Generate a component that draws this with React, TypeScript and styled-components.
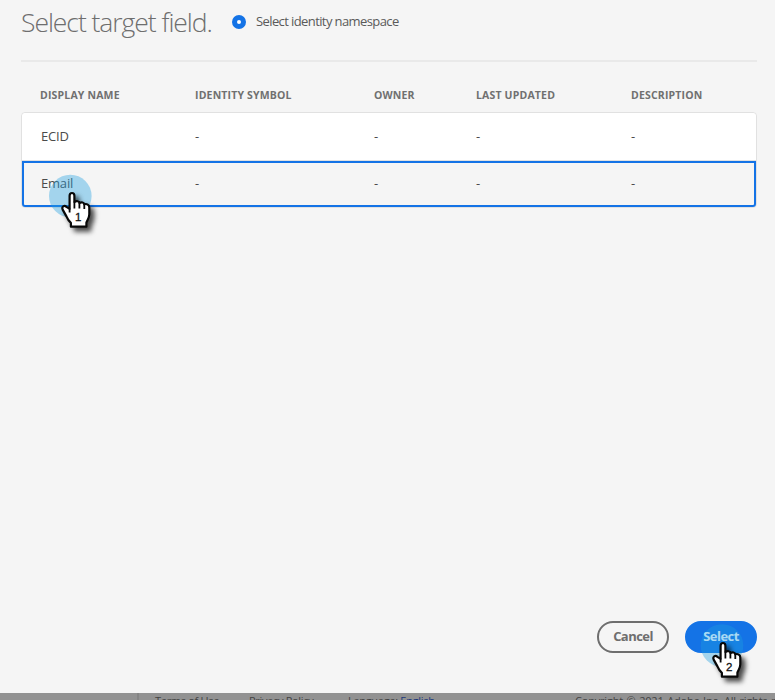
import React from 'react';
import styled, { createGlobalStyle } from 'styled-components';

const GlobalStyle = createGlobalStyle`
  * { box-sizing: border-box; }
  html, body { margin: 0; overflow: hidden; }
  body { background: #f5f5f5; font-family: 'Open Sans', 'Noto Sans', sans-serif; }
`;

const Page = styled.main`
  position: relative;
  display: flex;
  flex-direction: column;
  width: 775px;
  height: 700px;
  overflow: hidden;
  background: #f5f5f5;
`;

const Header = styled.header`
  display: flex;
  align-items: flex-start;
  height: 62px;
  margin: 0 18px 0 21px;
  border-bottom: 2px solid #e9e9e9;
`;

const Title = styled.h1`
  width: 211px;
  margin: 0;
  padding-top: 3px;
  font-size: 26.5px;
  font-weight: 300;
  line-height: 38px;
  letter-spacing: -1.05px;
  white-space: nowrap;
  color: #6e6e6e;
`;

const RadioLabel = styled.label`
  display: flex;
  align-items: center;
  gap: 10px;
  height: 20px;
  margin-top: 12px;
  font-size: 13px;
  letter-spacing: -0.6px;
  white-space: nowrap;
  color: #5a5a5a;
`;

const RadioText = styled.span`
  padding-bottom: 2px;
`;

const Radio = styled.span`
  width: 14px;
  height: 14px;
  border: 5px solid #1473e6;
  border-radius: 50%;
  background: #fff;
`;

const TableHead = styled.div`
  display: grid;
  grid-template-columns: 155px 179px 102px 155px 1fr;
  height: 50px;
  margin: 0 18px 0 21px;
  padding: 24px 0 0 19px;
  font-size: 10.5px;
  font-weight: 700;
  line-height: 18px;
  letter-spacing: 0.17px;
  white-space: nowrap;
  color: #707070;
`;

const TableBody = styled.div`
  height: 96px;
  margin: 0 18px 0 21px;
  border: 1px solid #e1e1e1;
  border-radius: 4px;
  background: #fff;
`;

const Row = styled.div<{ $selected?: boolean }>`
  display: grid;
  grid-template-columns: 154px 179px 102px 155px 1fr;
  align-items: center;
  height: ${p => (p.$selected ? 46 : 48)}px;
  padding: ${p => (p.$selected ? '0 0 2px 17px' : '0 0 1px 19px')};
  border: ${p => (p.$selected ? '2px solid #1473e6' : '0 solid #e1e1e1')};
  border-bottom-width: ${p => (p.$selected ? 2 : 1)}px;
  border-radius: ${p => (p.$selected ? '0 0 3px 3px' : '4px 4px 0 0')};
  background: ${p => (p.$selected ? '#f5f5f5' : '#fff')};
  font-size: 13px;
  letter-spacing: -0.2px;
  color: #4b4b4b;
`;

const Actions = styled.div`
  display: flex;
  justify-content: flex-end;
  gap: 16px;
  margin: auto 18px 40px 0;
`;

const Button = styled.button<{ $primary?: boolean }>`
  width: 72px;
  height: 32px;
  padding: 0 0 2px;
  border: 2px solid ${p => (p.$primary ? '#1473e6' : '#6e6e6e')};
  border-radius: 16px;
  background: ${p => (p.$primary ? '#1473e6' : 'transparent')};
  color: ${p => (p.$primary ? '#fff' : '#6e6e6e')};
  font-family: inherit;
  font-size: 13px;
  font-weight: 700;
  letter-spacing: -0.55px;
`;

const Footer = styled.footer`
  display: flex;
  flex: none;
  height: 7px;
  padding-left: 137px;
  overflow: hidden;
  background: #929292;
  font-size: 11px;
  line-height: 16px;
  letter-spacing: -0.3px;
  white-space: nowrap;
  color: #444;
`;

const FooterItem = styled.span<{ $width: number }>`
  flex: none;
  width: ${p => p.$width}px;
`;

const FooterRule = styled.span`
  flex: none;
  width: 2px;
  height: 7px;
  margin-right: 16px;
  background: #858585;
`;

const Copyright = styled(FooterItem)`
  letter-spacing: -0.2px;
  word-spacing: 1px;
`;

const Language = styled.span`
  color: #20397c;
`;

const Marker = styled.svg<{ $x: number; $y: number }>`
  position: absolute;
  left: ${p => p.$x}px;
  top: ${p => p.$y}px;
  width: 64px;
  height: 70px;
  overflow: visible;
  pointer-events: none;
`;

const Hand = styled.g`
  filter: drop-shadow(4px 4px 2.5px rgba(0, 0, 0, 0.7));
`;

function Pointer({ x, y, step, cx, cy }: { x: number; y: number; step: number; cx: number; cy: number }) {
  return (
    <Marker $x={x} $y={y} viewBox="0 0 64 70">
      <circle cx={cx} cy={cy} r="21.3" fill="#1e9fe0" fillOpacity="0.38" />
      <Hand>
        <path
          d="M29.6 43.7V30.7C29.6 27.1 34.4 27.1 34.4 30.7V37C36.5 35.5 39.2 36.2 39.4 38C41.5 36.7 44 37.5 44.3 39.3C46.8 38.4 49.3 39.9 49.3 42.4V49.2C49.3 53 47.2 55.4 46.4 57.7V61.7H30.9V57.8C28.7 56 27.4 53.7 26.3 51.1L22.8 44.9C21.2 41.7 24.3 39.9 26.4 41.9Z"
          fill="#fff"
          stroke="#080808"
          strokeWidth="2.2"
          strokeLinejoin="round"
        />
        <path d="M29.6 43.5V47.5M34.4 36.5V43.5M39.4 37.7V43.5M44.3 39V44" fill="none" stroke="#080808" strokeWidth="1.8" />
      </Hand>
      <text x="38.3" y="56" textAnchor="middle" fontFamily="Liberation Sans, sans-serif" fontSize="11.5" fill="#111" stroke="#111" strokeWidth="0.3">
        {step}
      </text>
    </Marker>
  );
}

const headings = ['DISPLAY NAME', 'IDENTITY SYMBOL', 'OWNER', 'LAST UPDATED', 'DESCRIPTION'];

function DataRow({ name, selected }: { name: string; selected?: boolean }) {
  return (
    <Row $selected={selected}>
      <span>{name}</span>
      <span>-</span>
      <span>-</span>
      <span>-</span>
      <span>-</span>
    </Row>
  );
}

export default function App() {
  return (
    <>
      <GlobalStyle />
      <Page>
        <Header>
          <Title>Select target field.</Title>
          <RadioLabel>
            <Radio />
            <RadioText>Select identity namespace</RadioText>
          </RadioLabel>
        </Header>
        <TableHead>
          {headings.map(h => (
            <span key={h}>{h}</span>
          ))}
        </TableHead>
        <TableBody>
          <DataRow name="ECID" />
          <DataRow name="Email" selected />
        </TableBody>
        <Actions>
          <Button>Cancel</Button>
          <Button $primary>Select</Button>
        </Actions>
        <Footer>
          <FooterRule />
          <FooterItem $width={94}>Terms of Use</FooterItem>
          <FooterItem $width={99}>Privacy Policy</FooterItem>
          <FooterItem $width={227}>
            Language: <Language>English</Language>
          </FooterItem>
          <Copyright $width={230}>Copyright © 2021 Adobe Inc. All rights reserved.</Copyright>
        </Footer>
        <Pointer x={40} y={165} step={1} cx={30.3} cy={31} />
        <Pointer x={690.7} y={615} step={2} cx={31} cy={30.5} />
      </Page>
    </>
  );
}
